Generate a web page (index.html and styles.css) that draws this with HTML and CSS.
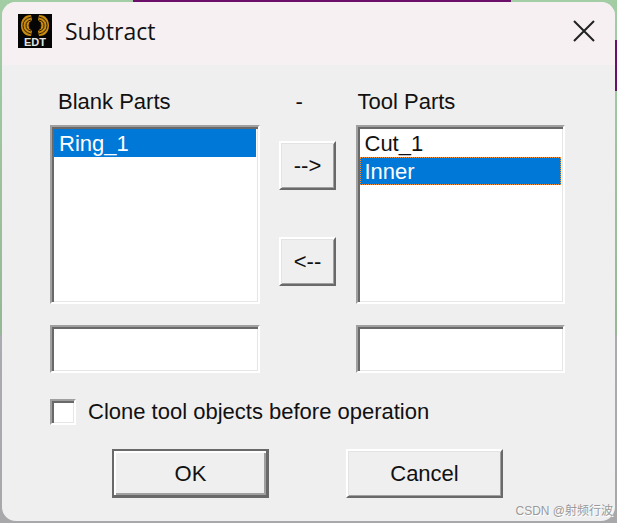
FILE: index.html
```
<!DOCTYPE html>
<html lang="en">
<head>
    <meta charset="UTF-8">
    <meta name="viewport" content="width=device-width, initial-scale=1.0">
    <title>Subtract</title>
    <link rel="stylesheet" href="styles.css">
</head>
<body>
    <div class="dialog" role="dialog" aria-labelledby="dialogTitle">
        <header class="titlebar">
            <svg class="app-icon" viewBox="0 0 34 34" aria-hidden="true">
                <rect width="34" height="34" fill="#050505"/>
                <g fill="#c98a10">
                    <path d="M13 1C6 1 3 6 3 11.500S6 22 13 22L14 17 11 14 11 9 14 6Z"/>
                    <path d="M21 1C28 1 31 6 31 11.500S28 22 21 22L20 17 23 14 23 9 20 6Z"/>
                </g>
                <g fill="none" stroke="#2b1c02" stroke-width="1">
                    <path d="M13 3Q5 5 5 11.500T13 20M13 6Q8 7 8 11.500T13 17M12 8l-1 3.500 1 3.500"/>
                    <path d="M21 3Q29 5 29 11.500T21 20M21 6Q26 7 26 11.500T21 17M22 8l1 3.500-1 3.500"/>
                </g>
                <text class="app-icon-text" x="17" y="32" text-anchor="middle">EDT</text>
            </svg>
            <h1 class="title" id="dialogTitle">Subtract</h1>
            <button class="close" type="button" aria-label="Close">
                <svg viewBox="0 0 22 22" aria-hidden="true">
                    <path d="M1 1L21 21M21 1L1 21" fill="none" stroke="#222" stroke-width="2"/>
                </svg>
            </button>
        </header>

        <form class="content">
            <div class="parts">
                <label class="parts-label" for="blankParts">Blank Parts</label>
                <span class="minus">-</span>
                <label class="parts-label tool-label" for="toolParts">Tool Parts</label>

                <select class="list sunken" id="blankParts" size="6">
                    <option selected>Ring_1</option>
                </select>
                <div class="move">
                    <button class="button" type="button">--&gt;</button>
                    <button class="button" type="button">&lt;--</button>
                </div>
                <select class="list sunken" id="toolParts" size="6">
                    <option>Cut_1</option>
                    <option class="current" selected>Inner</option>
                </select>

                <input class="field sunken" type="text" aria-label="Blank part name">
                <span></span>
                <input class="field sunken" type="text" aria-label="Tool part name">
            </div>

            <label class="clone">
                <input class="checkbox sunken" type="checkbox">
                Clone tool objects before operation
            </label>

            <div class="actions">
                <button class="button default" type="submit">OK</button>
                <button class="button" type="button">Cancel</button>
            </div>
        </form>
    </div>
    <div class="watermark">CSDN @射频行波</div>
</body>
</html>
```
FILE: styles.css
```
* {
    box-sizing: border-box;
}
body {
    margin: 0;
    padding: 2px;
    min-height: 100vh;
    display: flex;
    position: relative;
    font-family: "Liberation Sans", Arial, sans-serif;
    font-size: 22px;
    line-height: 28px;
    color: #111;
    background:
        linear-gradient(#6b0f6b, #6b0f6b) 133px 0 / 378px 2px no-repeat,
        linear-gradient(#6b0f6b, #6b0f6b) 100% 40px / 3px 51px no-repeat,
        linear-gradient(#a3cda5 0, #94b896 334px, #aaaab2 336px, #a8a8aa 100%);
}
.dialog {
    flex: 1;
    border-radius: 14px;
    background-color: #efefef;
    overflow: hidden;
}

/* title bar */
.titlebar {
    display: flex;
    align-items: center;
    height: 63px;
    padding: 0 20px 5px 16px;
    background-color: #f6f0f3;
}
.app-icon {
    width: 34px;
    height: 34px;
}
.app-icon-text {
    font-size: 11px;
    font-weight: bold;
    fill: #e4e4e4;
}
.title {
    flex: 1;
    margin: 0 0 0 13px;
    font-family: "Open Sans", "Noto Sans", sans-serif;
    font-size: 23px;
    font-weight: normal;
}
.close {
    display: flex;
    padding: 0;
    border: none;
    background: none;
}
.close svg {
    width: 22px;
    height: 22px;
}

/* classic bevels */
.sunken {
    margin: 0;
    border: 2px solid;
    border-color: #a0a0a0 #fff #fff #a0a0a0;
    border-radius: 0;
    outline: none;
    background-color: #fff;
    box-shadow: inset 2px 2px #696969, inset -1px -1px #e6e6e6;
}
.button {
    padding: 0;
    border: 2px solid;
    border-color: #fff #696969 #696969 #fff;
    border-radius: 0;
    background-color: #efefef;
    box-shadow: inset 1px 1px #e3e3e3, inset -1px -1px #a0a0a0;
    font: inherit;
    color: inherit;
}
.button.default {
    border-color: #696969;
    box-shadow: inset -1px -1px #696969, inset 2px 2px #fff, inset -3px -3px #a0a0a0;
}

.content {
    padding: 23px 50px 23px 48px;
}
.parts {
    display: grid;
    grid-template-columns: 1fr 96px 1fr;
}
.parts-label {
    padding-left: 8px;
}
.tool-label {
    padding-left: 2px;
}
.minus {
    padding-left: 36px;
}
.list {
    height: 179px;
    margin-top: 9px;
    padding: 2px;
    overflow: hidden;
    font: inherit;
    color: inherit;
}
.list option {
    min-height: 28px;
    padding: 2px 5px 0;
    line-height: 26px;
}
.list option:checked {
    background: #0078d7 linear-gradient(#0078d7, #0078d7);
    color: #fff;
}
.list .current {
    outline: 1px dotted #f0903c;
    outline-offset: -1px;
}
.move {
    display: flex;
    flex-direction: column;
    align-items: center;
    gap: 47px;
    padding-top: 25px;
}
.move .button {
    width: 57px;
    height: 49px;
}
.field {
    width: 100%;
    height: 48px;
    margin-top: 21px;
    padding: 4px 8px;
    font: inherit;
}
.clone {
    display: flex;
    align-items: center;
    gap: 12px;
    margin-top: 25px;
}
.checkbox {
    appearance: none;
    width: 26px;
    height: 26px;
}
.actions {
    display: flex;
    justify-content: center;
    gap: 77px;
    margin-top: 23px;
}
.actions .button {
    width: 157px;
    height: 49px;
}

.watermark {
    position: absolute;
    right: 4px;
    bottom: 2px;
    font-family: "Liberation Sans", "Noto Sans CJK SC", sans-serif;
    font-size: 12px;
    line-height: 20px;
    color: #9a9a9a;
    text-shadow: 1px 1px #fff;
}
```
